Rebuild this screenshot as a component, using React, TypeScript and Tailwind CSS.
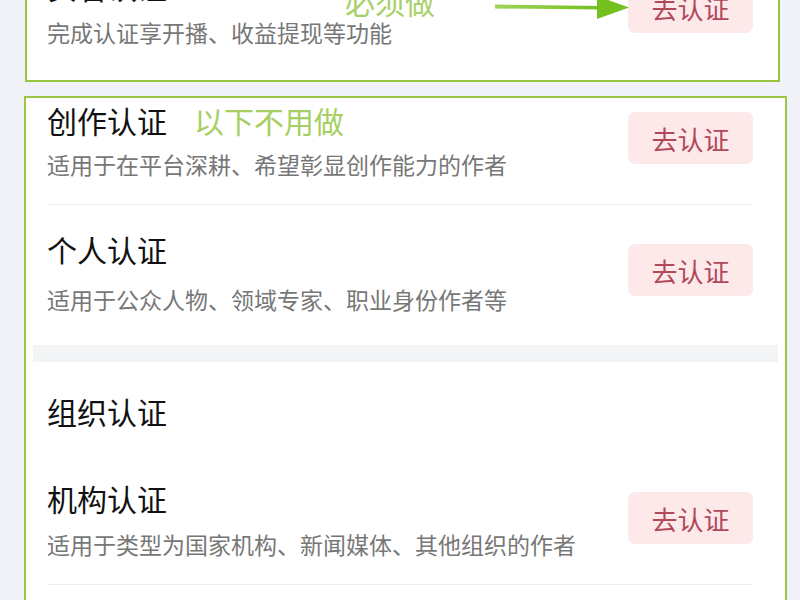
const font = "font-['Noto_Sans_CJK_SC','Noto_Sans',sans-serif]";

function CertButton({ className = "" }: { className?: string }) {
  return (
    <div
      className={`flex h-[52px] w-[125px] shrink-0 items-center justify-center rounded-[7px] bg-[#fde8ea] text-[26px] text-[#b0485a] ${className}`}
    >
      去认证
    </div>
  );
}

export default function App() {
  return (
    <div className={`h-[600px] w-[800px] overflow-hidden bg-[#f1f2f7] ${font}`}>
      {/* ---------------- Required card ---------------- */}
      <div className="relative mt-[-60px] ml-[25px] w-[755px] border-2 border-[#98c43e] bg-white">
        <div className="flex items-start justify-between pt-[26px] pr-[25px] pb-[33px] pl-[20px]">
          <div>
            <div className="h-[36px] text-[30px] leading-[36px] text-[#111111]">实名认证</div>
            <div className="mt-[13px] h-[30px] text-[23px] leading-[30px] text-[#777777]">
              完成认证享开播、收益提现等功能
            </div>
          </div>
          <CertButton className="mt-[13px]" />
        </div>

        {/* annotation: 必须做 + arrow */}
        <div className="absolute top-[41px] left-[318px] text-[30px] leading-[36px] text-[#a9d16a]">
          必须做
        </div>
        <svg
          className="absolute top-[50px] left-[466px]"
          width="140"
          height="30"
          viewBox="0 0 140 30"
        >
          <defs>
            <linearGradient id="arr" x1="0" x2="1" y1="0" y2="0">
              <stop offset="0" stopColor="#9fd35a" />
              <stop offset="1" stopColor="#73bf1f" />
            </linearGradient>
          </defs>
          <path d="M2 12.5 L108 14 L108 17.5 L2 16.5 Z" fill="url(#arr)" />
          <path d="M104 4 L136 15.5 L104 27 Z" fill="#74c01f" />
        </svg>
      </div>

      {/* ---------------- Optional card ---------------- */}
      <div className="mt-[14px] ml-[24px] h-[520px] w-[763px] border-2 border-[#9cc543] bg-white">
        {/* 创作认证 */}
        <div className="flex items-start justify-between border-b border-[#eeeeee] pt-[4px] pb-[25px] ml-[21px] mr-[32px]">
          <div>
            <div className="flex items-center">
              <span className="h-[36px] text-[30px] leading-[36px] text-[#111111]">创作认证</span>
              <span className="ml-[27px] text-[30px] leading-[36px] text-[#a6cf62]">以下不用做</span>
            </div>
            <div className="mt-[11px] h-[30px] text-[23px] leading-[30px] text-[#777777]">
              适用于在平台深耕、希望彰显创作能力的作者
            </div>
          </div>
          <CertButton className="mt-[10px]" />
        </div>

        {/* 个人认证 */}
        <div className="flex items-start justify-between pt-[26px] pb-[31px] ml-[21px] mr-[32px]">
          <div>
            <div className="h-[36px] text-[30px] leading-[36px] text-[#111111]">个人认证</div>
            <div className="mt-[17px] h-[30px] text-[23px] leading-[30px] text-[#777777]">
              适用于公众人物、领域专家、职业身份作者等
            </div>
          </div>
          <CertButton className="mt-[13px]" />
        </div>

        {/* section gap */}
        <div className="mx-[7px] h-[17px] bg-[#f2f4f5]" />

        {/* 组织认证 */}
        <div className="ml-[21px] mr-[32px] pt-[31px] h-[36px] box-content text-[30px] leading-[36px] text-[#111111]">
          组织认证
        </div>

        {/* 机构认证 */}
        <div className="flex items-start justify-between border-b border-[#eeeeee] mt-[51px] pb-[25px] ml-[21px] mr-[32px]">
          <div>
            <div className="h-[36px] text-[30px] leading-[36px] text-[#111111]">机构认证</div>
            <div className="mt-[13px] h-[30px] text-[23px] leading-[30px] text-[#777777]">
              适用于类型为国家机构、新闻媒体、其他组织的作者
            </div>
          </div>
          <CertButton className="mt-[12px]" />
        </div>
      </div>
    </div>
  );
}
